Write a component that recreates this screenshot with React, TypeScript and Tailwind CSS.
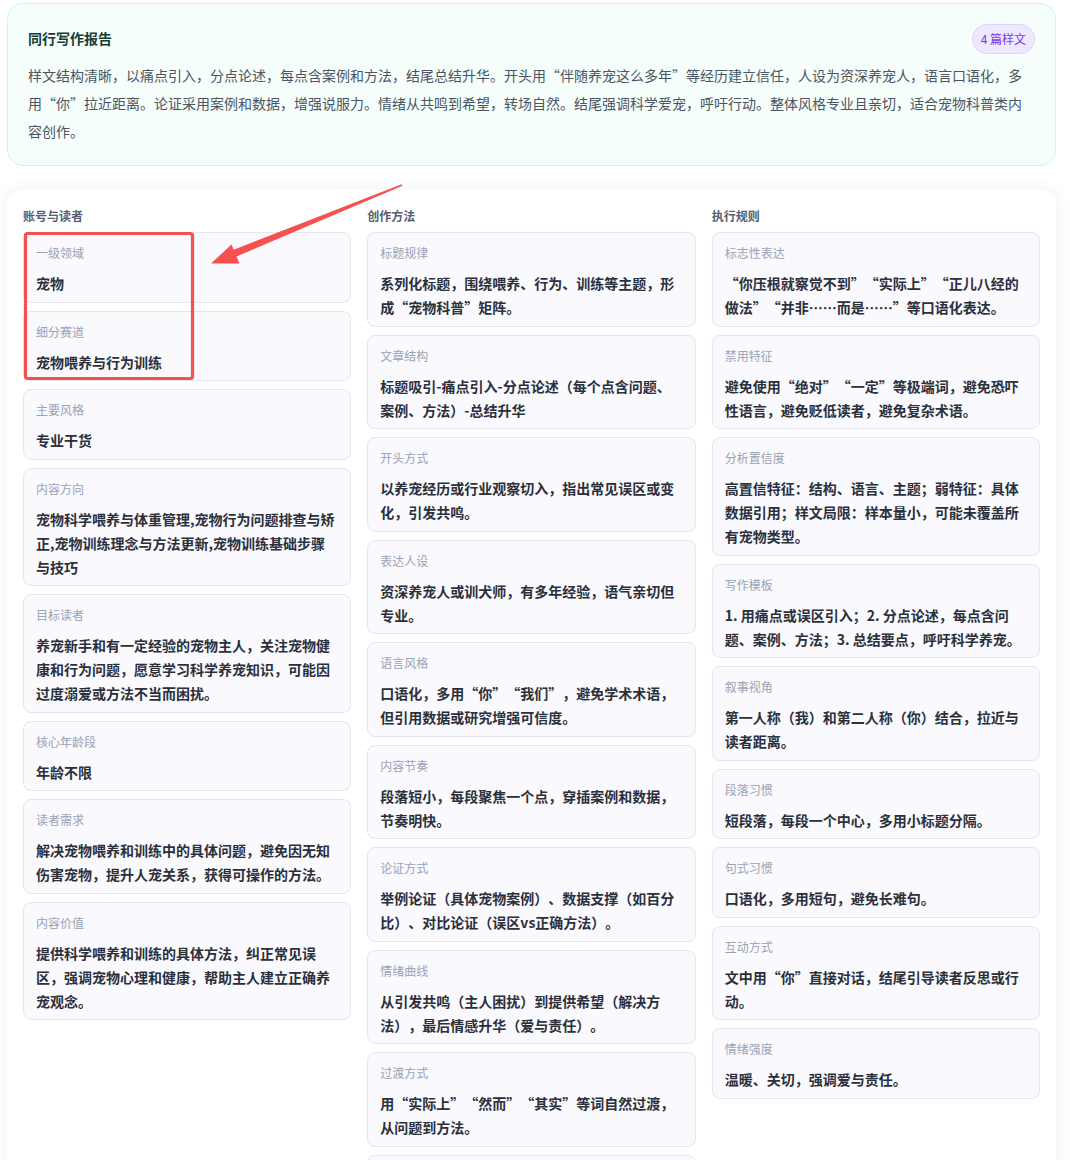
import React from "react"

type Item = { label: string; value: string }

const accountItems: Item[] = [
  { label: "一级领域", value: "宠物" },
  { label: "细分赛道", value: "宠物喂养与行为训练" },
  { label: "主要风格", value: "专业干货" },
  {
    label: "内容方向",
    value: "宠物科学喂养与体重管理,宠物行为问题排查与矫正,宠物训练理念与方法更新,宠物训练基础步骤与技巧",
  },
  {
    label: "目标读者",
    value: "养宠新手和有一定经验的宠物主人，关注宠物健康和行为问题，愿意学习科学养宠知识，可能因过度溺爱或方法不当而困扰。",
  },
  { label: "核心年龄段", value: "年龄不限" },
  {
    label: "读者需求",
    value: "解决宠物喂养和训练中的具体问题，避免因无知伤害宠物，提升人宠关系，获得可操作的方法。",
  },
  {
    label: "内容价值",
    value: "提供科学喂养和训练的具体方法，纠正常见误区，强调宠物心理和健康，帮助主人建立正确养宠观念。",
  },
]

const methodItems: Item[] = [
  { label: "标题规律", value: "系列化标题，围绕喂养、行为、训练等主题，形成“宠物科普”矩阵。" },
  { label: "文章结构", value: "标题吸引-痛点引入-分点论述（每个点含问题、案例、方法）-总结升华" },
  { label: "开头方式", value: "以养宠经历或行业观察切入，指出常见误区或变化，引发共鸣。" },
  { label: "表达人设", value: "资深养宠人或训犬师，有多年经验，语气亲切但专业。" },
  { label: "语言风格", value: "口语化，多用“你”“我们”，避免学术术语，但引用数据或研究增强可信度。" },
  { label: "内容节奏", value: "段落短小，每段聚焦一个点，穿插案例和数据，节奏明快。" },
  { label: "论证方式", value: "举例论证（具体宠物案例）、数据支撑（如百分比）、对比论证（误区vs正确方法）。" },
  { label: "情绪曲线", value: "从引发共鸣（主人困扰）到提供希望（解决方法），最后情感升华（爱与责任）。" },
  { label: "过渡方式", value: "用“实际上”“然而”“其实”等词自然过渡，从问题到方法。" },
  { label: "结尾方式", value: "总结要点，呼吁科学养宠，引导读者行动。" },
]

const ruleItems: Item[] = [
  {
    label: "标志性表达",
    value: "“你压根就察觉不到”“实际上”“正儿八经的做法”“并非……而是……”等口语化表达。",
  },
  {
    label: "禁用特征",
    value: "避免使用“绝对”“一定”等极端词，避免恐吓性语言，避免贬低读者，避免复杂术语。",
  },
  {
    label: "分析置信度",
    value: "高置信特征：结构、语言、主题；弱特征：具体数据引用；样文局限：样本量小，可能未覆盖所有宠物类型。",
  },
  {
    label: "写作模板",
    value: "1. 用痛点或误区引入；2. 分点论述，每点含问题、案例、方法；3. 总结要点，呼吁科学养宠。",
  },
  { label: "叙事视角", value: "第一人称（我）和第二人称（你）结合，拉近与读者距离。" },
  { label: "段落习惯", value: "短段落，每段一个中心，多用小标题分隔。" },
  { label: "句式习惯", value: "口语化，多用短句，避免长难句。" },
  { label: "互动方式", value: "文中用“你”直接对话，结尾引导读者反思或行动。" },
  { label: "情绪强度", value: "温暖、关切，强调爱与责任。" },
]

function InfoCard({ item }: { item: Item }) {
  return (
    <div className="rounded-lg border border-[#e6e6f1] bg-[#f9f9fe] px-3 pt-3 pb-[6.5px]">
      <div className="text-xs leading-4 text-[#9aa3b5]">{item.label}</div>
      <div className="mt-[10px] text-sm leading-6 font-semibold text-[#2b303b]">{item.value}</div>
    </div>
  )
}

function Column({ title, items }: { title: string; items: Item[] }) {
  return (
    <div className="flex flex-col">
      <div className="mb-2 text-xs leading-4 font-semibold text-[#556070]">{title}</div>
      <div className="flex flex-col gap-[8px]">
        {items.map((it) => (
          <InfoCard key={it.label} item={it} />
        ))}
      </div>
    </div>
  )
}

export default function App() {
  return (
    <div
      lang="zh-CN"
      className="relative min-h-[1160px] bg-white pl-[7px] pr-[14px] pt-[3px] pb-10 font-['Noto_Sans_CJK_SC','Noto_Sans',sans-serif] [text-spacing-trim:space-all]"
    >
      {/* 同行写作报告 */}
      <div className="rounded-2xl border border-[#cdf5ea] bg-[#f5fefb] px-5 pt-5 pb-5">
        <div className="flex h-[30px] items-center justify-between">
          <h2 className="-mt-0.5 text-sm font-bold text-[#173d38]">同行写作报告</h2>
          <span className="flex h-[30px] items-center rounded-full border border-[#ddd2fb] bg-[#efe9fe] px-2 text-xs text-[#7c3aed]">
            4 篇样文
          </span>
        </div>
        <p className="mt-[7px] text-sm leading-7 text-[#4b5563]">
          样文结构清晰，以痛点引入，分点论述，每点含案例和方法，结尾总结升华。开头用“伴随养宠这么多年”等经历建立信任，人设为资深养宠人，语言口语化，多用“你”拉近距离。论证采用案例和数据，增强说服力。情绪从共鸣到希望，转场自然。结尾强调科学爱宠，呼吁行动。整体风格专业且亲切，适合宠物科普类内容创作。
        </p>
      </div>

      {/* 分析详情 */}
      <div className="mt-6 rounded-2xl bg-white px-4 pt-[18px] pb-4 shadow-[0_0_18px_rgba(30,41,59,0.07)]">
        <div className="grid grid-cols-3 gap-4">
          <Column title="账号与读者" items={accountItems} />
          <Column title="创作方法" items={methodItems} />
          <Column title="执行规则" items={ruleItems} />
        </div>
      </div>

      {/* 标注 */}
      <svg
        className="pointer-events-none absolute left-0 top-0"
        width="1070"
        height="1160"
        viewBox="0 0 1070 1160"
      >
        <rect x="25.5" y="233.5" width="167" height="145" rx="2" fill="none" stroke="#f5514f" strokeWidth="3.2" />
        <polygon points="401.6,184.3 402.4,185.7 234,257.6 231,250.8" fill="#f5514f" />
        <polygon points="211,263.5 231.5,244.5 239.5,263.5" fill="#f5514f" />
      </svg>
    </div>
  )
}
